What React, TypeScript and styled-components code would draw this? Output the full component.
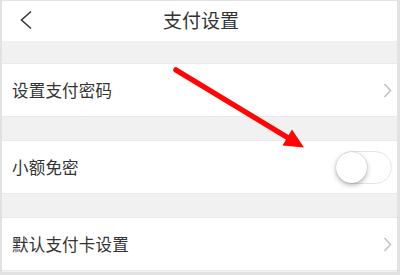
import React from "react";
import styled, { createGlobalStyle } from "styled-components";

const GlobalStyle = createGlobalStyle`
  html, body {
    margin: 0;
    padding: 0;
    background: #ffffff;
  }
  body {
    font-family: "Noto Sans CJK SC", "Noto Sans", sans-serif;
    color: #333333;
  }
`;

const rows = [
  { label: "设置支付密码", kind: "link" },
  { label: "小额免密", kind: "switch" },
  { label: "默认支付卡设置", kind: "link" },
];

const App = () => {
  return (
    <>
      <GlobalStyle />
      <Frame>
        <Header>
          <Back>
            <svg width="14" height="20" viewBox="0 0 14 20">
              <path d="M12 1.5 L2.5 10 L12 18.5" fill="none" stroke="#3a3a3a" strokeWidth="1.6" />
            </svg>
          </Back>
          <Title>支付设置</Title>
          <span />
        </Header>
        {rows.map((row) => (
          <Section key={row.label}>
            <Row>
              <Label>{row.label}</Label>
              {row.kind === "switch" ? (
                <Toggle>
                  <Knob />
                </Toggle>
              ) : (
                <svg width="9" height="15" viewBox="0 0 9 15">
                  <path d="M1.5 1 L7.5 7.5 L1.5 14" fill="none" stroke="#c4c4c4" strokeWidth="1.6" />
                </svg>
              )}
            </Row>
          </Section>
        ))}
        <Arrow width="400" height="275" viewBox="0 0 400 275">
          <line x1="176" y1="70" x2="290" y2="139" stroke="#fe0606" strokeWidth="5.5" strokeLinecap="round" />
          <polygon points="304,147.5 282.5,145.5 292,129.5" fill="#fe0606" />
        </Arrow>
      </Frame>
    </>
  );
};

export default App;

const Frame = styled.div`
  position: relative;
  width: 400px;
  height: 275px;
  box-sizing: border-box;
  border-style: solid;
  border-color: #e2e2e2;
  border-width: 1px 3px 3px 2px;
  background: #f1f1f1;
  overflow: hidden;
`;

const Header = styled.div`
  height: 40px;
  background: #ffffff;
  display: grid;
  grid-template-columns: 40px 1fr 40px;
  align-items: center;
`;

const Back = styled.div`
  display: flex;
  align-items: center;
  padding-left: 17px;
  padding-bottom: 3px;
`;

const Title = styled.div`
  text-align: center;
  font-size: 19px;
  color: #333333;
  padding-bottom: 3px;
  padding-left: 3px;
`;

const Section = styled.div`
  padding-top: 22px;
  & + & {
    padding-top: 23px;
  }
`;

const Row = styled.div`
  height: 54px;
  box-sizing: border-box;
  background: #ffffff;
  border-top: 1px solid #e9e9e9;
  border-bottom: 1px solid #e9e9e9;
  display: flex;
  align-items: center;
  justify-content: space-between;
  padding: 0 5px 0 10px;
`;

const Label = styled.div`
  font-size: 16.5px;
  color: #333333;
  letter-spacing: 0.2px;
`;

const Toggle = styled.div`
  width: 56px;
  height: 33px;
  box-sizing: border-box;
  border: 1.5px solid #e4e4e4;
  border-radius: 17px;
  background: #ffffff;
  display: flex;
  align-items: center;
  margin-top: 1px;
`;

const Knob = styled.div`
  width: 31px;
  height: 31px;
  border-radius: 50%;
  background: #ffffff;
  box-shadow: 0 2px 5px rgba(0, 0, 0, 0.3), 0 0 1px rgba(0, 0, 0, 0.3);
  margin-left: -1px;
`;

const Arrow = styled.svg`
  position: absolute;
  left: -2px;
  top: -1px;
  pointer-events: none;
`;
